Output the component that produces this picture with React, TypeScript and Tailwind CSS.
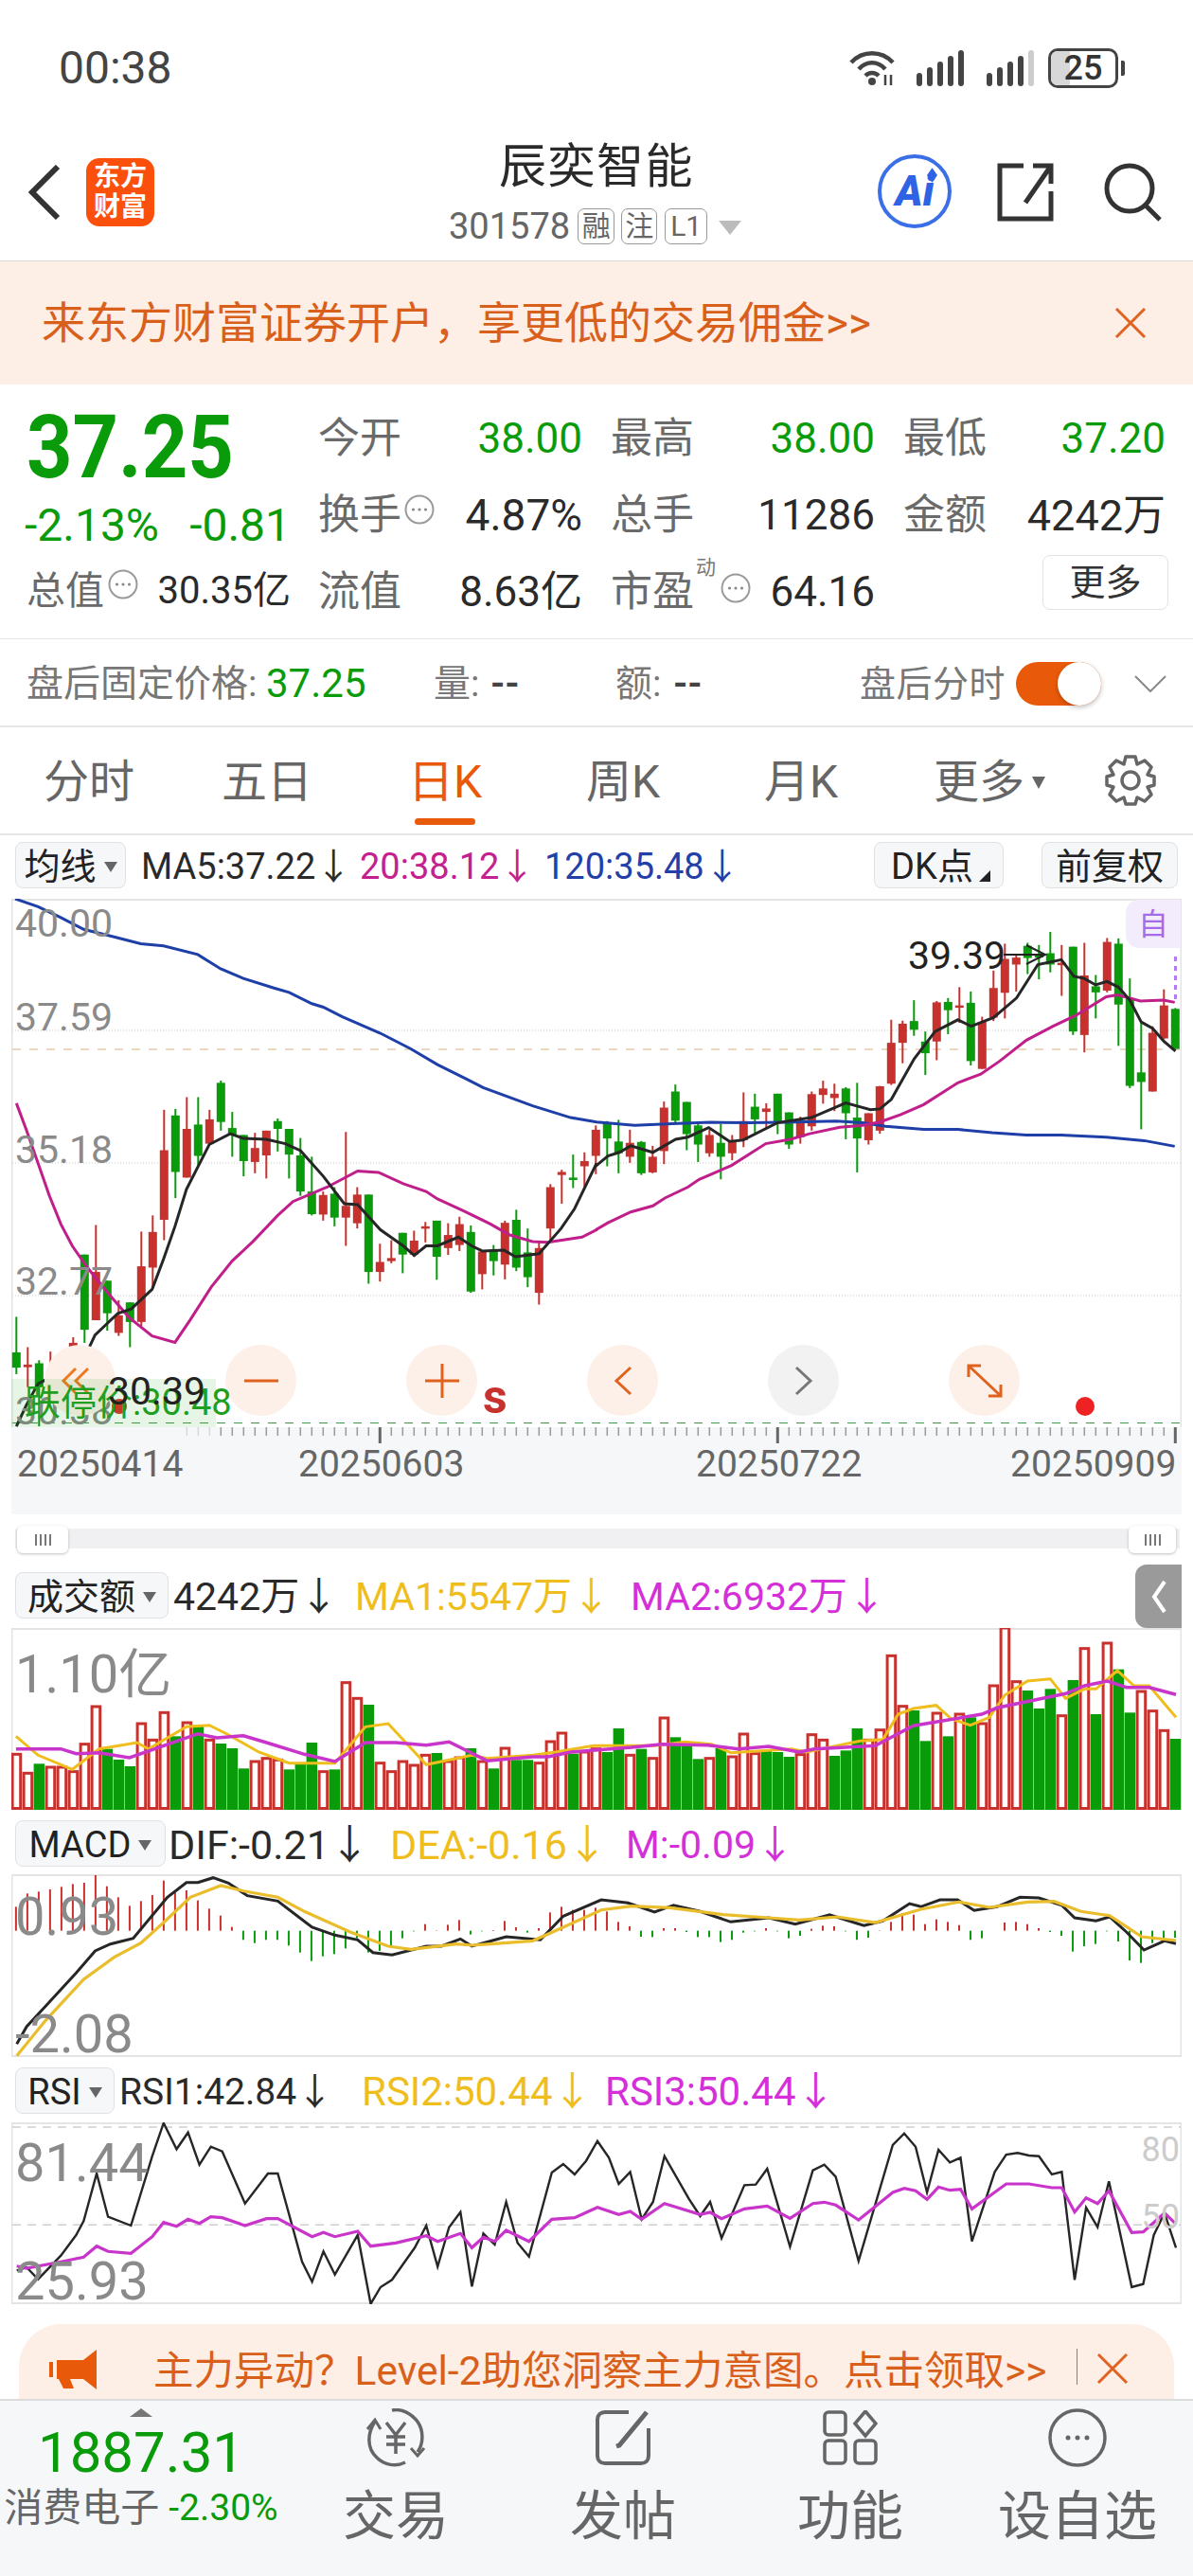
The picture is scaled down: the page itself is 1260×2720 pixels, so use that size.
import React from "react";

type Pt = number[];
const poly = (pts: Pt[], fx: (v: number) => number, fy: (v: number) => number) =>
  pts.map((p) => `${fx(p[0]).toFixed(1)},${fy(p[1]).toFixed(1)}`).join(" ");

const z3x = (v: number) => v / 2.489;
const z4x = (v: number) => 630 + v / 2.489;
const zy = (v: number) => 900 + v / 2.178;
const pline = (a: Pt[], b: Pt[]) =>
  poly(a, z3x, zy) + " " + poly(b, z4x, zy);

const blue3: Pt[] = [[40,107],[100,125],[160,150],[220,177],[290,192],[370,210],[430,215],[520,235],[580,268],[640,290],[720,312],[760,322],[820,348],[850,356],[900,378],[1000,416],[1080,452],[1150,488],[1230,523],[1270,541],[1400,583],[1500,610],[1568,620]];
const blue4: Pt[] = [[0,620],[100,628],[200,624],[300,621],[400,622],[500,621],[630,618],[700,622],[760,630],[860,637],[950,637],[1040,645],[1130,650],[1220,650],[1340,655],[1440,663],[1520,676]];
const mag3: Pt[] = [[43,577],[70,640],[100,715],[130,790],[160,855],[190,905],[230,955],[290,1020],[340,1070],[400,1112],[460,1127],[500,1075],[555,1000],[610,940],[665,895],[730,835],[770,803],[860,770],[940,733],[995,736],[1060,762],[1120,780],[1150,797],[1220,825],[1290,855],[1340,880],[1400,895],[1440,897],[1530,885],[1568,868]];
const mag4: Pt[] = [[0,867],[30,852],[90,827],[148,813],[180,795],[240,770],[270,752],[355,720],[445,670],[510,660],[560,647],[640,632],[700,628],[745,620],[800,603],[860,580],[950,530],[1010,510],[1060,480],[1130,432],[1200,400],[1260,375],[1340,332],[1370,328],[1430,342],[1490,340],[1520,345]];
const blk3: Pt[] = [[43,1320],[70,1270],[100,1222],[160,1195],[220,1165],[250,1110],[310,1060],[345,1050],[400,1005],[430,935],[460,860],[490,775],[550,672],[605,647],[640,658],[700,660],[750,670],[790,686],[850,745],[905,808],[940,810],[1000,868],[1060,905],[1089,927],[1120,905],[1150,905],[1205,885],[1240,905],[1268,917],[1325,915],[1355,930],[1417,923],[1475,865],[1510,820],[1568,715]];
const blk4: Pt[] = [[0,720],[30,698],[60,690],[90,675],[148,690],[208,660],[240,655],[295,633],[350,665],[385,662],[475,622],[565,610],[655,576],[720,592],[745,590],[775,568],[835,475],[890,412],[950,385],[985,400],[1044,380],[1104,335],[1160,258],[1222,247],[1255,285],[1282,290],[1312,305],[1342,297],[1372,310],[1402,340],[1432,390],[1462,405],[1492,435],[1522,457]];

// hi, bodyTop, bodyBottom, lo, red(1)/green(0)
const candles: number[][] = [
[1068,1150,1185,1200,0],[1138,1178,1184,1230,1],[1168,1175,1230,1320,0],[1148,1205,1230,1240,1],[1150,1172,1222,1240,1],[1115,1128,1190,1210,1],[925,925,1098,1128,0],[857,965,1076,1076,1],[985,985,1060,1100,0],[1030,1065,1105,1112,1],[1035,1035,1080,1138,0],[872,952,1080,1090,1],[835,873,955,1000,1],[592,685,845,892,1],[590,605,735,795,0],[563,636,748,748,1],[563,626,698,720,0],[592,614,670,672,1],[525,530,620,640,0],[597,634,650,700,0],[650,650,710,745,0],[645,680,712,738,1],[640,640,697,750,1],[612,618,636,688,0],[636,636,695,750,0],[657,697,780,790,0],[700,780,832,835,0],[780,788,833,847,1],[770,785,840,860,0],[643,813,840,905,1],[770,787,853,865,1],[787,787,965,992,0],[900,942,965,987,1],[892,933,940,945,1],[875,875,925,968,0],[870,893,925,930,1],[850,860,864,897,1],[847,847,930,983,0],[853,880,910,926,1],[838,855,903,917,1],[858,873,1010,1013,0],[915,918,970,1005,1],[903,913,940,973,0],[847,852,948,982,1],[822,845,955,963,0],[865,920,977,1000,0],[895,910,1013,1040,1],[763,770,865,895,1],[730,735,742,808,1],[695,748,752,772,0],[690,710,722,770,1],[628,638,698,740,1],
[618,622,658,722,0],[615,665,692,738,0],[638,668,700,714,1],[664,666,738,742,0],[675,700,736,738,1],[573,587,687,717,1],[534,550,617,625,0],[574,574,648,685,0],[622,628,672,712,0],[638,650,692,700,1],[625,668,700,752,0],[650,664,692,708,1],[552,618,662,678,1],[555,585,614,645,0],[577,589,597,635,1],[555,555,620,648,0],[598,598,672,682,0],[608,622,655,670,1],[550,556,630,640,1],[525,543,558,578,1],[532,555,565,595,1],[540,543,600,660,0],[530,610,658,736,0],[600,600,662,672,1],[537,538,640,647,1],[385,438,532,535,1],[387,394,438,485,1],[340,388,408,422,0],[412,435,462,512,0],[342,345,435,478,1],[335,344,363,418,0],[310,352,356,392,1],[320,346,480,490,0],[378,390,498,498,1],[272,312,380,388,1],[210,245,323,382,1],[235,242,258,320,1],[208,215,243,280,0],[213,233,242,292,0],[183,232,258,276,0],[213,254,258,330,1],[217,217,412,420,0],[208,283,420,460,1],[282,308,322,382,0],[197,206,318,322,1],[198,210,350,445,0],[290,335,537,542,0],[390,506,528,637,0],[400,415,550,550,1],[315,352,428,430,1],[358,360,452,452,0],
];

const vol: number[][] = [[697,1],[757,1],[727,0],[738,1],[738,1],[752,1],[665,1],[546,1],[680,0],[714,0],[735,0],[600,1],[652,1],[565,1],[640,0],[597,1],[605,0],[652,1],[663,0],[678,0],[742,0],[720,1],[710,1],[715,1],[745,0],[725,0],[660,0],[752,1],[745,0],[470,1],[520,1],[540,0],[725,1],[752,1],[720,1],[732,1],[700,1],[693,0],[720,1],[708,1],[678,0],[720,1],[742,0],[678,1],[715,0],[715,0],[725,1],[657,1],[630,1],[695,0],[690,1],[680,1],[690,0],[615,0],[700,1],[680,0],[710,1],[582,1],[643,0],[665,0],[712,0],[710,1],[678,0],[705,1],[633,1],[695,1],[685,0],[690,0],[705,0],[698,1],[635,1],[652,1],[702,0],[685,0],[615,0],[652,1],[620,1],[385,1],[545,1],[558,0],[655,0],[567,1],[640,0],[570,1],[580,0],[600,1],[480,1],[297,1],[467,1],[495,0],[552,0],[490,0],[575,1],[462,0],[362,1],[570,0],[345,1],[428,0],[565,0],[498,1],[560,1],[622,1],[648,0]];
const vy = (v: number) => 1620 + v / 3;
const rx = (v: number) => v / 1.244;
const volY: Pt[] = [[21,640],[50,700],[95,745],[130,680],[180,660],[195,680],[245,610],[275,605],[300,635],[340,690],[380,725],[440,725],[480,610],[510,600],[560,730],[620,700],[640,710],[700,700],[730,690],[780,670],[860,670],[900,658],[935,665],[960,692],[1040,680],[1060,690],[1130,655],[1160,650],[1180,570],[1200,552],[1230,542],[1250,585],[1275,605],[1300,580],[1320,510],[1350,465],[1380,458],[1400,520],[1425,490],[1440,490],[1468,432],[1490,480],[1510,480],[1545,580]];
const volM: Pt[] = [[21,680],[80,680],[100,695],[130,692],[170,708],[215,670],[260,632],[285,645],[320,638],[350,660],[400,697],[440,720],[480,660],[520,660],[560,668],[590,658],[640,718],[700,705],[720,705],[750,690],[830,675],[870,665],[930,668],[970,680],[1010,672],[1050,690],[1070,680],[1150,670],[1200,607],[1290,570],[1310,550],[1400,505],[1425,480],[1455,465],[1480,485],[1510,485],[1545,508]];

const my = (v: number) => 1920 + v / 3;
const macdH = [280,238,232,225,217,208,204,180,215,250,277,262,243,197,235,228,260,286,308,344,385,395,385,385,403,425,452,437,430,412,380,425,420,405,380,358,335,355,337,322,368,358,354,325,345,362,348,298,280,290,290,283,295,328,342,375,376,348,348,360,376,376,392,385,362,358,348,358,380,372,350,340,342,358,385,378,355,328,300,305,335,320,328,338,385,380,356,330,328,335,348,360,372,422,405,398,358,390,450,458,395,378,378];
const macdB: Pt[] = [[22,715],[35,660],[60,595],[100,490],[125,420],[145,398],[175,380],[220,250],[245,203],[260,203],[280,188],[300,205],[325,245],[365,262],[410,345],[440,370],[470,385],[490,425],[515,433],[560,405],[580,405],[605,382],[620,405],[665,375],[710,385],[740,310],[790,258],[825,268],[860,297],[885,275],[920,295],[960,328],[1010,315],[1045,335],[1090,305],[1135,340],[1160,325],[1195,270],[1210,280],[1235,258],[1258,258],[1280,292],[1310,280],[1340,250],[1365,252],[1395,275],[1412,315],[1440,325],[1458,312],[1480,360],[1503,417],[1530,388],[1545,397]];
const macdY: Pt[] = [[22,752],[60,640],[110,510],[150,440],[185,395],[215,330],[250,250],[290,213],[320,230],[365,250],[400,295],[460,360],[510,405],[540,415],[600,398],[620,402],[700,388],[740,345],[790,290],[830,278],[880,283],[950,305],[1010,315],[1050,322],[1100,312],[1150,330],[1210,288],[1260,265],[1300,282],[1350,265],[1385,263],[1420,295],[1458,308],[1500,375],[1545,387]];

const ry = (v: number) => 2170 + v / 3;
const rsiB: Pt[] = [[22,682],[35,672],[50,710],[80,635],[100,570],[110,525],[127,375],[142,512],[172,540],[200,320],[215,215],[232,298],[247,245],[262,347],[277,290],[292,305],[322,470],[352,375],[365,375],[397,655],[410,718],[425,622],[440,695],[470,570],[487,788],[500,735],[515,712],[545,610],[560,540],[575,670],[590,545],[605,497],[620,733],[635,565],[650,600],[665,465],[680,595],[695,638],[725,372],[740,345],[755,378],[770,335],[785,272],[800,325],[813,408],[828,370],[843,520],[858,465],[873,320],[905,455],[920,510],[933,465],[948,580],[978,412],[993,410],[1008,360],[1038,607],[1068,365],[1083,347],[1098,385],[1128,652],[1173,285],[1188,248],[1203,290],[1218,435],[1233,300],[1248,340],[1262,325],[1277,590],[1307,370],[1322,315],[1337,310],[1352,318],[1365,320],[1382,378],[1395,370],[1412,712],[1427,483],[1442,545],[1457,400],[1487,735],[1502,725],[1516,570],[1530,500],[1545,610]];
const rsiM: Pt[] = [[22,668],[35,675],[80,655],[110,640],[127,605],[142,622],[172,628],[200,575],[215,530],[232,542],[247,520],[262,533],[277,512],[292,515],[322,540],[350,518],[365,518],[410,575],[425,562],[440,575],[470,558],[487,605],[520,595],[560,572],[575,590],[605,565],[620,610],[635,577],[650,590],[665,555],[695,590],[725,520],[755,515],[785,482],[813,505],[828,495],[843,520],[873,470],[920,505],[933,498],[948,518],[978,487],[1008,478],[1038,517],[1068,470],[1083,466],[1098,475],[1128,522],[1173,435],[1188,422],[1203,430],[1218,457],[1233,418],[1248,428],[1262,425],[1277,487],[1322,408],[1352,408],[1382,420],[1395,420],[1412,497],[1427,452],[1442,470],[1457,430],[1487,562],[1502,560],[1530,500],[1545,535]];

const RED = "#c8322e";
const GRN = "#0a9b0a";

function PriceChart() {
  return (
    <svg viewBox="12 949 1236 558" className="absolute left-0 top-0 h-[558px] w-[1236px]">
      <rect x="12.5" y="950" width="1235" height="560" fill="none" stroke="#e4e4e4" strokeWidth="2" />
      {[1088, 1228, 1368].map((y) => (
        <line key={y} x1="13" x2="1247" y1={y} y2={y} stroke="#c9c9c9" strokeDasharray="1 2" />
      ))}
      <line x1="13" x2="1247" y1="1108" y2="1108" stroke="#dfae80" strokeDasharray="9 9" />
      <line x1="13" x2="1247" y1="1502.5" y2="1502.5" stroke="#3f9d3f" strokeDasharray="9 9" />
      {candles.map((c, i) => {
        const x = 17.3 + 12 * i;
        const col = c[4] ? RED : GRN;
        const t = zy(c[1]);
        const b = zy(c[2]);
        return (
          <g key={i}>
            <line x1={x} x2={x} y1={zy(c[0])} y2={zy(c[3])} stroke={col} strokeWidth="2" />
            <rect x={x - 4.5} y={t} width="9" height={Math.max(b - t, 2.5)} fill={col} />
          </g>
        );
      })}
      <polyline points={pline(blue3, blue4)} fill="none" stroke="#1f3fa8" strokeWidth="3" />
      <polyline points={pline(mag3, mag4)} fill="none" stroke="#c01e8a" strokeWidth="3" />
      <polyline points={pline(blk3, blk4)} fill="none" stroke="#262626" strokeWidth="3" />
      <path d="M1060 1008H1103M1084 998L1104 1008L1084 1018" fill="none" stroke="#222" strokeWidth="2" />
      <line x1="1241.5" x2="1241.5" y1="1010" y2="1058" stroke="#b47cf0" strokeWidth="3" strokeDasharray="5 5" />
      <circle cx="1146" cy="1485" r="10" fill="#ee2222" />
      <circle cx="126" cy="1485" r="8" fill="#d8342a" />
    </svg>
  );
}

function Ticks() {
  return (
    <svg viewBox="12 1507 1236 20" className="absolute left-0 top-0 h-[20px] w-[1236px]">
      {candles.map((_, i) => {
        if (i < 15) return null;
        const x = 17.3 + 12 * i;
        const tall = i === 32 || i === 67 || i === 102;
        const col = i < 18 ? "#d8d8d8" : tall ? "#666" : "#999";
        return <line key={i} x1={x} x2={x} y1="1507" y2={tall ? 1524 : 1516} stroke={col} strokeWidth={tall ? 3 : 1.5} />;
      })}
    </svg>
  );
}

function VolChart() {
  return (
    <svg viewBox="12 1719 1236 192" className="absolute left-0 top-0 h-[192px] w-[1236px]">
      <rect x="12.5" y="1720" width="1235" height="190" fill="none" stroke="#e4e4e4" strokeWidth="2" />
      {vol.map((v, i) => {
        const x = 17.3 + 12 * i;
        const t = vy(v[0]);
        if (v[1]) return <rect key={i} x={x - 4.2} y={t} width="8.6" height={1909.5 - t} fill="#fff" stroke={RED} strokeWidth="3" />;
        return <rect key={i} x={x - 5.7} y={t} width="11.5" height={1911 - t} fill={GRN} />;
      })}
      <polyline points={poly(volY, rx, vy)} fill="none" stroke="#efbe1d" strokeWidth="3" />
      <polyline points={poly(volM, rx, vy)} fill="none" stroke="#c935cb" strokeWidth="3.5" />
    </svg>
  );
}

function MacdChart() {
  return (
    <svg viewBox="12 1979 1236 193" className="absolute left-0 top-0 h-[193px] w-[1236px]">
      <rect x="12.5" y="1980" width="1235" height="191" fill="none" stroke="#e4e4e4" strokeWidth="2" />
      {macdH.map((v, i) => {
        const x = rx(21 + 14.93 * i);
        const zero = my(356);
        const y = my(v);
        return <line key={i} x1={x} x2={x} y1={zero} y2={y} stroke={v < 356 ? RED : GRN} strokeWidth="2" />;
      })}
      <polyline points={poly(macdB, rx, my)} fill="none" stroke="#262626" strokeWidth="3" />
      <polyline points={poly(macdY, rx, my)} fill="none" stroke="#e9bd2c" strokeWidth="3.2" />
    </svg>
  );
}

function RsiChart() {
  return (
    <svg viewBox="12 2241 1236 192" className="absolute left-0 top-0 h-[192px] w-[1236px]">
      <rect x="12.5" y="2242" width="1235" height="190" fill="none" stroke="#e4e4e4" strokeWidth="2" />
      {[228, 538].map((v) => (
        <line key={v} x1="13" x2="1247" y1={ry(v)} y2={ry(v)} stroke="#cfcfcf" strokeWidth="1.5" strokeDasharray="9 7" />
      ))}
      <polyline points={poly(rsiB, rx, ry)} fill="none" stroke="#262626" strokeWidth="2.4" />
      <polyline points={poly(rsiM, rx, ry)} fill="none" stroke="#c935cb" strokeWidth="3.2" />
    </svg>
  );
}

function Info() {
  return (
    <svg viewBox="0 0 32 32" className="h-[32px] w-[32px] shrink-0">
      <circle cx="16" cy="16" r="14.5" fill="none" stroke="#9a9a9a" strokeWidth="2" />
      <circle cx="9.5" cy="16" r="1.6" fill="#888" />
      <circle cx="16" cy="16" r="1.6" fill="#888" />
      <circle cx="22.5" cy="16" r="1.6" fill="#888" />
    </svg>
  );
}

function Box({ children, w }: { children: React.ReactNode; w: string }) {
  return (
    <div className={`flex h-[49px] shrink-0 items-center justify-center rounded-[8px] border border-[#dfe1e5] bg-[#f6f7f9] pt-[3px] text-[38px] leading-none text-[#222] ${w}`}>
      {children}
    </div>
  );
}

function Tri() {
  return <span className="ml-[8px] h-0 w-0 shrink-0 border-x-[7px] border-t-[11px] border-x-transparent border-t-[#666]" />;
}

function Lab({ c }: { c: string }) {
  return <span className="text-[44px] leading-none text-[#6a6a6a]">{c}</span>;
}
function Num({ c, g }: { c: string; g?: boolean }) {
  return <span className={`text-[44px] leading-none ${g ? "text-[#0a9b0a]" : "text-[#2a2a2a]"}`}>{c}</span>;
}

export default function App() {
  return (
    <div className="h-[2720px] w-[1260px] overflow-hidden bg-white [font-family:Roboto,'Noto_Sans_CJK_SC',sans-serif]">
      {/* status bar */}
      <div className="flex h-[144px] items-center justify-between pl-[62px] pr-[72px]">
        <span className="text-[48px] leading-none text-[#444]">00:38</span>
        <div className="flex items-center">
          <svg viewBox="0 0 50 38" className="h-[38px] w-[50px]">
            <path d="M3 13C15 0 35 0 47 13M11 20C19 11 31 11 39 20M18 27C22 23 28 23 32 27" fill="none" stroke="#444" strokeWidth="4.5" />
            <circle cx="25" cy="33" r="4" fill="#444" />
            <path d="M39 26V37M45 26V37" stroke="#444" strokeWidth="2.5" />
          </svg>
          <svg viewBox="0 0 50 38" className="ml-[22px] h-[38px] w-[50px]">
            {[0, 1, 2, 3, 4].map((i) => (
              <rect key={i} x={i * 11} y={24 - i * 6} width="6" height={14 + i * 6} rx="3" fill="#444" />
            ))}
          </svg>
          <svg viewBox="0 0 50 38" className="ml-[24px] h-[38px] w-[50px]">
            {[0, 1, 2, 3, 4].map((i) => (
              <rect key={i} x={i * 11} y={24 - i * 6} width="6" height={14 + i * 6} rx="3" fill={i === 4 ? "#ccc" : "#444"} />
            ))}
          </svg>
          <div className="ml-[15px] flex items-center">
            <div className="relative flex h-[42px] w-[74px] items-center justify-center overflow-hidden rounded-[10px] border-[3px] border-[#444] text-[36px] font-medium leading-none text-[#333]">
              <span className="absolute bottom-0 left-0 top-0 w-[20px] bg-[#d8d8d8]" />
              <span className="relative">25</span>
            </div>
            <span className="ml-[3px] h-[16px] w-[4px] rounded-r-[2px] bg-[#444]" />
          </div>
        </div>
      </div>

      {/* nav */}
      <div className="relative flex h-[132px] border-b border-[#dcdcdc]">
        <svg viewBox="0 0 34 58" className="absolute left-[30px] top-[30px] h-[58px] w-[34px]">
          <path d="M31 2L4 29L31 56" fill="none" stroke="#333" strokeWidth="6" />
        </svg>
        <div className="absolute left-[91px] top-[23px] flex h-[72px] w-[72px] flex-col items-center justify-center rounded-[14px] bg-[#fb4f0c] text-[28px] font-bold leading-[32px] text-white">
          <span>东方</span>
          <span>财富</span>
        </div>
        <div className="absolute left-[474px] top-[2px] flex w-[320px] flex-col">
          <span className="ml-[53px] text-[50px] leading-[60px] tracking-[1.5px] text-[#2a2a2a]">辰奕智能</span>
          <div className="mt-[14px] flex items-center">
            <span className="text-[38px] leading-none text-[#666]">301578</span>
            <span className="ml-[8px] flex h-[38px] w-[39px] items-center justify-center rounded-[7px] border border-[#999] text-[30px] leading-none text-[#666]">融</span>
            <span className="ml-[7px] flex h-[38px] w-[38px] items-center justify-center rounded-[7px] border border-[#999] text-[30px] leading-none text-[#666]">注</span>
            <span className="ml-[8px] flex h-[38px] w-[45px] items-center justify-center rounded-[7px] border border-[#999] text-[30px] leading-none text-[#666]">L1</span>
            <span className="ml-[12px] mt-[3px] h-0 w-0 border-x-[12px] border-t-[15px] border-x-transparent border-t-[#bbb]" />
          </div>
        </div>
        <div className="absolute left-[927px] top-[19px] flex h-[78px] w-[78px] items-center justify-center rounded-full border-[4px] border-[#3b6fe8] text-[44px] font-black italic leading-none text-[#2f63e6]">
          Ai
          <svg viewBox="0 0 14 20" className="absolute left-[48px] top-[10px] h-[16px] w-[11px]"><path d="M7 0L14 10L7 20L0 10Z" fill="#2f63e6" /></svg>
        </div>
        <svg viewBox="0 0 60 62" className="absolute left-[1053px] top-[28px] h-[62px] w-[60px]">
          <path d="M28 3H3V59H57V30M57 3L30 42M38 3H57V22" fill="none" stroke="#333" strokeWidth="5" />
        </svg>
        <svg viewBox="0 0 62 62" className="absolute left-[1165px] top-[28px] h-[62px] w-[62px]">
          <circle cx="28" cy="27" r="24" fill="none" stroke="#333" strokeWidth="5" />
          <path d="M45 45L60 60" stroke="#333" strokeWidth="5" />
        </svg>
      </div>

      {/* promo */}
      <div className="flex h-[130px] items-center justify-between bg-[#fdeee6] pl-[44px] pr-[49px] text-[#d9601a]">
        <span className="text-[46px] leading-none">来东方财富证券开户，享更低的交易佣金&gt;&gt;</span>
        <svg viewBox="0 0 34 34" className="h-[34px] w-[34px]">
          <path d="M2 2L32 32M32 2L2 32" stroke="#e0621f" strokeWidth="3" />
        </svg>
      </div>

      {/* stats */}
      <div className="relative h-[269px] border-b border-[#e8e8e8]">
        <div className="absolute left-[28px] top-[21px] origin-left scale-x-[0.92] text-[92px] font-bold leading-[92px] text-[#0a9b0a]">37.25</div>
        <div className="absolute left-[26px] top-[125px] flex w-[281px] justify-between text-[48px] leading-none text-[#0a9b0a]">
          <span>-2.13%</span>
          <span>-0.81</span>
        </div>
        <div className="absolute left-[28px] top-[195px] flex w-[279px] items-center">
          <span className="text-[41px] leading-none text-[#6a6a6a]">总值</span>
          <span className="mb-[14px] ml-[4px]"><Info /></span>
          <span className="ml-auto text-[40px] leading-none text-[#2a2a2a]">30.35亿</span>
        </div>
        <div className="absolute left-[336px] top-[35px] grid w-[895px] grid-cols-[279px_279px_277px] gap-x-[30px] gap-y-[37px]">
          <div className="flex h-[44px] items-center justify-between"><Lab c="今开" /><Num c="38.00" g /></div>
          <div className="flex h-[44px] items-center justify-between"><Lab c="最高" /><Num c="38.00" g /></div>
          <div className="flex h-[44px] items-center justify-between"><Lab c="最低" /><Num c="37.20" g /></div>
          <div className="flex h-[44px] items-center"><Lab c="换手" /><span className="mb-[12px] ml-[3px]"><Info /></span><span className="ml-auto text-[46px] leading-none text-[#2a2a2a]">4.87%</span></div>
          <div className="flex h-[44px] items-center justify-between"><Lab c="总手" /><Num c="11286" /></div>
          <div className="flex h-[44px] items-center justify-between"><Lab c="金额" /><span className="text-[45px] leading-none text-[#2a2a2a]">4242万</span></div>
          <div className="flex h-[44px] items-center justify-between"><Lab c="流值" /><Num c="8.63亿" /></div>
          <div className="relative flex h-[44px] items-center justify-between">
            <Lab c="市盈" />
            <span className="absolute left-[90px] top-[-14px] text-[21px] leading-none text-[#777]">动</span>
            <span className="absolute left-[116px] top-[2px]"><Info /></span>
            <Num c="64.16" />
          </div>
          <div className="relative">
            <div className="absolute right-[-3px] top-[-17px] flex h-[58px] w-[133px] items-center justify-center rounded-[8px] border border-[#e3e3e3] text-[38px] leading-none text-[#333]">更多</div>
          </div>
        </div>
      </div>

      {/* after hours */}
      <div className="relative flex h-[93px] items-center border-b-2 border-[#e5e5e5] pl-[28px] pt-[3px] text-[39px] leading-none text-[#777]">
        <span className="w-[253px] whitespace-nowrap">盘后固定价格:</span>
        <span className="w-[177px] text-[42px] text-[#0a9b0a]">37.25</span>
        <span className="w-[60px]">量:</span>
        <span className="w-[132px] font-bold text-[#444]">--</span>
        <span className="w-[61px]">额:</span>
        <span className="w-[197px] font-bold text-[#444]">--</span>
        <span className="w-[165px] whitespace-nowrap text-[38px] tracking-[0.5px]">盘后分时</span>
        <div className="relative h-[46px] w-[90px] rounded-full bg-[#e85a0a]">
          <span className="absolute right-0 top-0 h-[46px] w-[46px] rounded-full bg-white shadow-[0_2px_5px_rgba(0,0,0,0.25)]" />
        </div>
        <svg viewBox="0 0 34 18" className="ml-[35px] h-[18px] w-[34px]">
          <path d="M1 1L17 17L33 1" fill="none" stroke="#888" strokeWidth="2" />
        </svg>
      </div>

      {/* tabs */}
      <div className="flex h-[114px] items-center border-b-2 border-[#e5e5e5] text-[48px] leading-none text-[#666]">
        <div className="flex w-[188px] justify-center pt-[4px]">分时</div>
        <div className="flex w-[188px] justify-center pt-[4px]">五日</div>
        <div className="relative flex h-full w-[188px] items-center justify-center pt-[4px] text-[#e85a0a]">
          日K
          <span className="absolute bottom-[9px] left-[62px] h-[7px] w-[64px] rounded-[4px] bg-[#e85a0a]" />
        </div>
        <div className="flex w-[188px] justify-center pt-[4px]">周K</div>
        <div className="flex w-[188px] justify-center pt-[4px]">月K</div>
        <div className="flex w-[188px] items-center justify-center pt-[4px]">
          <span className="ml-[22px]">更多</span>
          <span className="ml-[8px] h-0 w-0 border-x-[7px] border-t-[13px] border-x-transparent border-t-[#666]" />
        </div>
        <svg viewBox="0 0 56 56" className="ml-[38px] h-[56px] w-[56px]">
          <path d="M23 3H33L35 11L43 7L50 14L46 22L53 24V33L46 35L50 43L43 50L35 46L33 53H23L21 46L13 50L6 43L10 35L3 33V24L10 22L6 14L13 7L21 11Z" fill="none" stroke="#666" strokeWidth="3.5" strokeLinejoin="round" />
          <circle cx="28" cy="28" r="9" fill="none" stroke="#666" strokeWidth="3.5" />
        </svg>
      </div>

      {/* K header */}
      <div className="flex h-[67px] items-start px-[16px] pt-[7px] text-[38px] leading-[52px]">
        <Box w="w-[117px]">均线<Tri /></Box>
        <span className="ml-[16px] w-[231px] text-[#2a2a2a]">MA5:37.22↓</span>
        <span className="w-[195px] text-[#c4208f]">20:38.12↓</span>
        <span className="text-[#2340a8]">120:35.48↓</span>
        <div className="ml-auto flex gap-[40px]">
          <div className="relative">
            <Box w="w-[137px]"><span className="mr-[14px]">DK点</span></Box>
            <span className="absolute bottom-[7px] right-[14px] h-0 w-0 border-b-[12px] border-l-[12px] border-b-[#222] border-l-transparent" />
          </div>
          <Box w="w-[144px]">前复权</Box>
        </div>
      </div>

      {/* price panel */}
      <div className="relative mx-[12px] h-[558px] w-[1236px]">
        <PriceChart />
        <span className="absolute left-[4px] top-[6px] text-[41px] leading-[40px] text-[#8a8a8a]">40.00</span>
        <span className="absolute left-[4px] top-[105px] text-[41px] leading-[40px] text-[#8a8a8a]">37.59</span>
        <span className="absolute left-[4px] top-[245px] text-[41px] leading-[40px] text-[#8a8a8a]">35.18</span>
        <span className="absolute left-[4px] top-[384px] text-[41px] leading-[40px] text-[#8a8a8a]">32.77</span>
        <span className="absolute left-[4px] top-[521px] text-[41px] leading-[40px] text-[#8a8a8a]">30.38</span>
        <div className="absolute left-[35px] top-[471px] flex gap-[116px]">
          <div className="flex h-[75px] w-[75px] items-center justify-center rounded-full bg-[#fdf0e8] pr-[12px]">
            <svg viewBox="0 0 34 34" className="h-[34px] w-[34px]"><path d="M18 4L5 17L18 30M31 4L18 17L31 30" fill="none" stroke="#ee7a22" strokeWidth="3" /></svg>
          </div>
          <div className="flex h-[75px] w-[75px] items-center justify-center rounded-full bg-[#fdf0e8]">
            <svg viewBox="0 0 36 8" className="h-[8px] w-[36px]"><path d="M0 4H36" stroke="#e0621f" strokeWidth="3" /></svg>
          </div>
          <div className="flex h-[75px] w-[75px] items-center justify-center rounded-full bg-[#fdf0e8]">
            <svg viewBox="0 0 36 36" className="h-[36px] w-[36px]"><path d="M0 18H36M18 0V36" stroke="#e0621f" strokeWidth="3" /></svg>
          </div>
          <div className="flex h-[75px] w-[75px] items-center justify-center rounded-full bg-[#fdf0e8]">
            <svg viewBox="0 0 20 32" className="h-[32px] w-[20px]"><path d="M18 2L3 16L18 30" fill="none" stroke="#e0621f" strokeWidth="3" /></svg>
          </div>
          <div className="flex h-[75px] w-[75px] items-center justify-center rounded-full bg-[#f2f2f2]">
            <svg viewBox="0 0 20 32" className="h-[32px] w-[20px]"><path d="M2 2L17 16L2 30" fill="none" stroke="#777" strokeWidth="3" /></svg>
          </div>
          <div className="flex h-[75px] w-[75px] items-center justify-center rounded-full bg-[#fdf0e8]">
            <svg viewBox="0 0 38 36" className="h-[36px] w-[38px]"><path d="M2 14V2H15M2 2L36 34M36 22V34H23" fill="none" stroke="#e0621f" strokeWidth="3" /></svg>
          </div>
        </div>
        <div className="absolute left-0 top-[507px] h-[51px] w-[216px] bg-[#0a9b0a]/10" />
        <span className="absolute left-[14px] top-[512px] whitespace-nowrap text-[38px] leading-[40px] text-[#1f9f1f]">跌停价:30.48</span>
        <span className="absolute left-[102px] top-[500px] text-[41px] leading-[40px] text-[#222]">30.39</span>
        <span className="absolute left-[947px] top-[40px] text-[41px] leading-[40px] text-[#222]">39.39</span>
        <span className="absolute left-[498px] top-[506px] text-[50px] font-bold leading-[40px] text-[#c8322e]">s</span>
        <div className="absolute left-[1177px] top-[1px] flex h-[51px] w-[58px] items-center justify-center rounded-bl-[14px] rounded-tl-[14px] bg-[#f3ecfd] text-[32px] leading-none text-[#a66be8]">自</div>
      </div>

      {/* axis */}
      <div className="relative mx-[12px] h-[92px] w-[1236px] bg-[#f6f7f9] text-[39px] leading-none text-[#666]">
        <Ticks />
        <span className="absolute left-[6px] top-[20px]">20250414</span>
        <span className="absolute left-[303px] top-[20px]">20250603</span>
        <span className="absolute left-[723px] top-[20px]">20250722</span>
        <span className="absolute left-[1055px] top-[20px]">20250909</span>
      </div>

      {/* scrollbar */}
      <div className="relative mx-[16px] mt-[15px] h-[21px] w-[1230px] bg-[#f0f0f2]">
        <div className="absolute left-[2px] top-[-3px] flex h-[29px] w-[54px] items-center justify-center gap-[3px] rounded-[6px] bg-white shadow-[0_1px_3px_rgba(0,0,0,0.25)]">
          <span className="h-[12px] w-[2px] bg-[#777]" /><span className="h-[12px] w-[2px] bg-[#777]" /><span className="h-[12px] w-[2px] bg-[#777]" /><span className="h-[12px] w-[2px] bg-[#777]" />
        </div>
        <div className="absolute left-[1176px] top-[-3px] flex h-[29px] w-[50px] items-center justify-center gap-[3px] rounded-[6px] bg-white shadow-[0_1px_3px_rgba(0,0,0,0.25)]">
          <span className="h-[12px] w-[2px] bg-[#777]" /><span className="h-[12px] w-[2px] bg-[#777]" /><span className="h-[12px] w-[2px] bg-[#777]" /><span className="h-[12px] w-[2px] bg-[#777]" />
        </div>
      </div>

      {/* volume header */}
      <div className="relative mt-[25px] flex h-[59px] items-start pl-[16px] text-[41px] leading-[52px]">
        <Box w="w-[162px]"><span>成交额</span><Tri /></Box>
        <span className="ml-[5px] w-[192px] whitespace-nowrap text-[#2a2a2a]">4242万↓</span>
        <span className="w-[291px] whitespace-nowrap text-[#efbe1d]">MA1:5547万↓</span>
        <span className="whitespace-nowrap text-[#d42fd9]">MA2:6932万↓</span>
        <div className="absolute right-[12px] top-[-8px] flex h-[67px] w-[49px] items-center justify-center rounded-l-[12px] bg-[#9a9a9a]">
          <svg viewBox="0 0 18 36" className="h-[36px] w-[18px]"><path d="M15 2L4 18L15 34" fill="none" stroke="#fff" strokeWidth="4" /></svg>
        </div>
      </div>

      {/* volume panel */}
      <div className="relative mx-[12px] h-[192px] w-[1236px]">
        <VolChart />
        <span className="absolute left-[4px] top-[19px] text-[56px] leading-[60px] text-[#8a8a8a]">1.10亿</span>
      </div>

      {/* macd header */}
      <div className="mt-[11px] flex h-[57px] items-start pl-[16px] text-[43px] leading-[52px]">
        <Box w="w-[159px]"><span>MACD</span><Tri /></Box>
        <span className="ml-[3px] w-[234px] whitespace-nowrap text-[#2a2a2a]">DIF:-0.21↓</span>
        <span className="w-[249px] whitespace-nowrap text-[#efbe1d]">DEA:-0.16↓</span>
        <span className="whitespace-nowrap text-[41px] text-[#d42fd9]">M:-0.09↓</span>
      </div>
      <div className="relative mx-[12px] h-[193px] w-[1236px]">
        <MacdChart />
        <span className="absolute left-[4px] top-[15px] text-[56px] leading-[60px] text-[#8a8a8a]">0.93</span>
        <span className="absolute left-[4px] top-[139px] text-[56px] leading-[60px] text-[#8a8a8a]">-2.08</span>
      </div>

      {/* rsi header */}
      <div className="mt-[11px] flex h-[58px] items-start pl-[16px] text-[42px] leading-[52px]">
        <Box w="w-[105px]"><span>RSI</span><Tri /></Box>
        <span className="ml-[5px] w-[256px] whitespace-nowrap text-[39px] text-[#2a2a2a]">RSI1:42.84↓</span>
        <span className="w-[257px] whitespace-nowrap text-[#efbe1d]">RSI2:50.44↓</span>
        <span className="whitespace-nowrap text-[#d42fd9]">RSI3:50.44↓</span>
      </div>
      <div className="relative mx-[12px] h-[192px] w-[1236px]">
        <RsiChart />
        <span className="absolute left-[4px] top-[13px] text-[56px] leading-[60px] text-[#8a8a8a]">81.44</span>
        <span className="absolute left-[4px] top-[138px] text-[56px] leading-[60px] text-[#8a8a8a]">25.93</span>
        <span className="absolute right-[2px] top-[11px] text-[36px] leading-none text-[#cccccc]">80</span>
        <span className="absolute right-[2px] top-[82px] text-[36px] leading-none text-[#cccccc]">50</span>
      </div>

      {/* bottom banner */}
      <div className="mx-[20px] mt-[21px] flex h-[79px] w-[1220px] items-start rounded-t-[45px] bg-[#fdeee6] pl-[32px] pt-[26px] text-[#d9601a]">
        <svg viewBox="0 0 52 44" className="h-[44px] w-[52px] shrink-0">
          <path d="M0 14H4V30H0ZM8 12L36 12L50 1V43L36 32L22 32L26 42L15 42L10 32L8 32Z" fill="#e85a0a" />
        </svg>
        <span className="ml-[58px] whitespace-nowrap pt-[2px] text-[42.5px] leading-[44px]">主力异动？Level-2助您洞察主力意图。点击领取&gt;&gt;</span>
        <span className="ml-[32px] h-[38px] w-px shrink-0 bg-[#e0621f]" />
        <svg viewBox="0 0 34 34" className="ml-[20px] mt-[4px] h-[34px] w-[34px] shrink-0">
          <path d="M2 2L32 32M32 2L2 32" stroke="#e0621f" strokeWidth="3" />
        </svg>
      </div>

      {/* bottom nav */}
      <div className="flex h-[187px] border-t-2 border-[#dcdcdc] bg-[#f6f7f9]">
        <div className="flex w-[298px] flex-col items-center pt-[8px]">
          <span className="h-0 w-0 border-x-[12px] border-b-[9px] border-x-transparent border-b-[#777]" />
          <span className="mt-[9px] text-[60px] leading-[58px] text-[#0a9b0a]">1887.31</span>
          <div className="mt-[9px] flex items-center whitespace-nowrap text-[41px] leading-none text-[#666]">
            <span>消费电子</span>
            <span className="ml-[10px] text-[39px] text-[#0a9b0a]">-2.30%</span>
          </div>
        </div>
        {[
          { t: "交易", i: (
            <svg viewBox="0 0 68 62" className="h-[62px] w-[68px]">
              <path d="M12 14C4 26 3 42 14 52C22 60 34 62 44 57" fill="none" stroke="#666" strokeWidth="3.5" />
              <path d="M30 2C40 0 50 5 57 14C64 24 63 38 57 46" fill="none" stroke="#666" strokeWidth="3.5" />
              <path d="M4 22L12 12L18 22M50 42L57 50L64 42" fill="none" stroke="#666" strokeWidth="3" />
              <path d="M24 15L34 28L44 15M34 28V48M24 30H44M24 38H44" fill="none" stroke="#666" strokeWidth="3.5" />
            </svg>
          )},
          { t: "发帖", i: (
            <svg viewBox="0 0 60 60" className="h-[60px] w-[60px]">
              <path d="M36 3H11C6 3 3 6 3 11V49C3 54 6 57 11 57H49C54 57 57 54 57 49V20" fill="none" stroke="#666" strokeWidth="4" />
              <path d="M55 3L26 38L23 39" fill="none" stroke="#666" strokeWidth="5" />
            </svg>
          )},
          { t: "功能", i: (
            <svg viewBox="0 0 58 58" className="h-[58px] w-[58px]">
              <rect x="2" y="2" width="22" height="24" rx="4" fill="none" stroke="#666" strokeWidth="3.5" />
              <rect x="2" y="32" width="22" height="24" rx="4" fill="none" stroke="#666" strokeWidth="3.5" />
              <rect x="34" y="32" width="22" height="24" rx="4" fill="none" stroke="#666" strokeWidth="3.5" />
              <path d="M45 1L56 14L45 27L34 14Z" fill="none" stroke="#666" strokeWidth="3.5" />
            </svg>
          )},
          { t: "设自选", i: (
            <svg viewBox="0 0 62 62" className="h-[62px] w-[62px]">
              <circle cx="31" cy="31" r="29" fill="none" stroke="#666" strokeWidth="3.5" />
              <circle cx="21" cy="31" r="2.5" fill="#666" />
              <circle cx="31" cy="31" r="2.5" fill="#666" />
              <circle cx="41" cy="31" r="2.5" fill="#666" />
            </svg>
          )},
        ].map((x) => (
          <div key={x.t} className="flex w-[240px] flex-col items-center pt-[8px]">
            <div className="flex h-[62px] items-center">{x.i}</div>
            <span className="mt-[24px] whitespace-nowrap text-[56px] leading-[56px] text-[#666]">{x.t}</span>
          </div>
        ))}
      </div>
    </div>
  );
}
